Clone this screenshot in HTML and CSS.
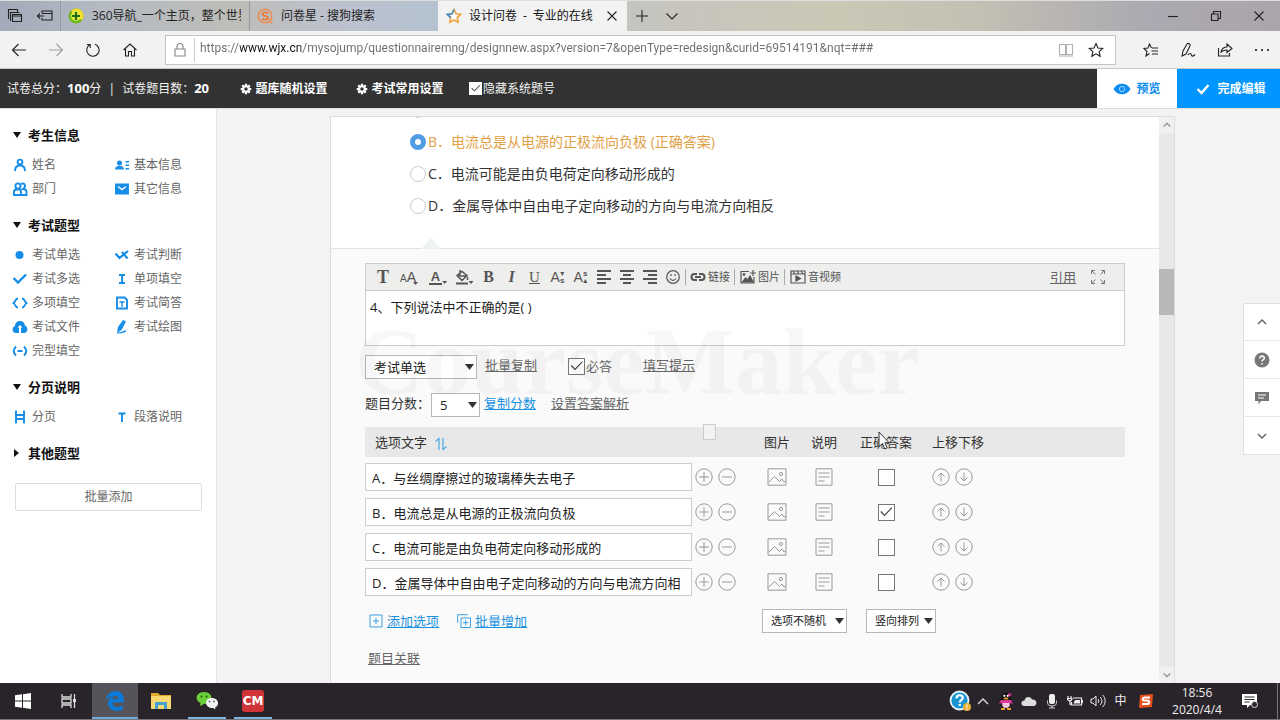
FILE: index.html
```html
<!DOCTYPE html>
<html lang="zh-CN">
<head>
<meta charset="utf-8">
<title>设计问卷 - 专业的在线</title>
<link rel="stylesheet" href="styles.css">
</head>
<body>
<svg class="sprite" aria-hidden="true">
  <symbol id="plus" viewBox="0 0 18 18"><circle cx="9" cy="9" r="8.2"/><path d="M4 9h10M9 4v10"/></symbol>
  <symbol id="minus" viewBox="0 0 18 18"><circle cx="9" cy="9" r="8.2"/><path d="M4 9h10"/></symbol>
  <symbol id="up" viewBox="0 0 18 18"><circle cx="9" cy="9" r="8.2"/><path d="M9 13.500V5M5.500 8.500 9 5l3.500 3.500"/></symbol>
  <symbol id="down" viewBox="0 0 18 18"><circle cx="9" cy="9" r="8.2"/><path d="M9 4.500V13M5.500 9.500 9 13l3.500-3.500"/></symbol>
  <symbol id="image" viewBox="0 0 20 18"><path d="M1 .8h18v16.400H1zM1.500 14.500l6-6 5 5 2.500-2.500 2 3 2-1"/><circle cx="14" cy="6" r="1.600"/></symbol>
  <symbol id="note" viewBox="0 0 18 18"><path d="M1 .8h16v16.400H1zM3.500 5h11M3.500 9h11M3.500 13h6"/></symbol>
  <symbol id="gear" viewBox="0 0 16 16"><path d="M8 1v14M1 8h14M3 3l10 10M13 3 3 13" stroke="currentColor" stroke-width="3"/><circle cx="8" cy="8" r="5" fill="currentColor"/><circle cx="8" cy="8" r="2.300" fill="#323232"/></symbol>
  <symbol id="chev" viewBox="0 0 12 12"><path d="M2 8l4-4 4 4"/></symbol>
</svg>

<header class="tabs">
  <button class="tab-tool" aria-label="标签页"><svg class="ln" width="16" height="16" viewBox="0 0 16 16"><path d="M1.500 11V1.500h9V4M3.500 13V4.500h9"/><path d="M5.500 6.500h9v7h-9zM5.500 8h9"/></svg></button>
  <button class="tab-tool" aria-label="搁置标签页"><svg class="ln" width="18" height="14" viewBox="0 0 18 14"><path d="M6 4V2h10v9H6V9M6 4.500h10M1 7h7M4 4.500 1.500 7 4 9.500"/></svg></button>
  <div class="tab">
    <svg width="16" height="16" viewBox="0 0 16 16"><circle cx="8" cy="8" r="7.500" fill="#6cb81e"/><path d="M8 .5a7.500 7.500 0 0 1 6 12L3 3A7.500 7.500 0 0 1 8 .5" fill="#f5dc2a"/><circle cx="8" cy="8" r="5" fill="#e9e83c"/><path d="M8 4v8M4 8h8" stroke="#1d6a1a" stroke-width="2.200"/></svg>
    <span class="tab-title">360导航_一个主页，整个世界</span>
  </div>
  <div class="tab">
    <svg width="16" height="16" viewBox="0 0 16 16"><circle cx="8" cy="8" r="6.800" fill="none" stroke="#ef8a50" stroke-width="1.600"/><path d="M11 5.200C9.500 4 5.500 4 5.500 6.200S11 7.500 11 9.800 7 12 5 10.600" fill="none" stroke="#ef7a3a" stroke-width="1.800"/><path d="M12 13l3 2" stroke="#ef8a50" stroke-width="1.600"/></svg>
    <span class="tab-title">问卷星 - 搜狗搜索</span>
  </div>
  <div class="tab active">
    <svg width="16" height="16" viewBox="0 0 16 16"><path d="M8 1.500l2 4.300 4.700.6-3.500 3.200.9 4.700L8 12l-4.100 2.300.9-4.700L1.300 6.400 6 5.800z" fill="#fff" stroke="#f0a23c" stroke-width="1.600"/><path d="M8 1.500l-2 4.300-4.700.6 3.500 3.200" fill="none" stroke="#3f8fd0" stroke-width="1.600"/></svg>
    <span class="tab-title">设计问卷&ensp;-&ensp;专业的在线</span>
    <button class="tab-close" aria-label="关闭标签页"><svg class="ln" width="12" height="12" viewBox="0 0 12 12"><path d="M1.500 1.500l9 9M10.500 1.500l-9 9"/></svg></button>
  </div>
  <button class="tab-add" aria-label="新建标签页"><svg class="ln" width="14" height="14" viewBox="0 0 14 14"><path d="M1 7h12M7 1v12"/></svg></button>
  <button class="tab-add" aria-label="标签预览"><svg class="ln" width="14" height="14" viewBox="0 0 14 14"><path d="M1.500 4.500 7 10l5.500-5.500"/></svg></button>
  <div class="window-buttons">
    <button aria-label="最小化"><svg class="ln" width="12" height="12" viewBox="0 0 12 12"><path d="M1 6.500h10"/></svg></button>
    <button aria-label="还原"><svg class="ln" width="12" height="12" viewBox="0 0 12 12"><path d="M1.500 4h6.500v6.500H1.500zM3.500 4V1.500h7V8.500H8"/></svg></button>
    <button aria-label="关闭"><svg class="ln" width="12" height="12" viewBox="0 0 12 12"><path d="M1.500 1.500l9 9M10.500 1.500l-9 9"/></svg></button>
  </div>
</header>

<nav class="address-row">
  <button class="nav-btn" aria-label="后退"><svg class="ln" width="16" height="14" viewBox="0 0 16 14"><path d="M15 7H1.500M7.500 1l-6 6 6 6"/></svg></button>
  <button class="nav-btn dim" aria-label="前进"><svg class="ln" width="16" height="14" viewBox="0 0 16 14"><path d="M1 7h13.500M8.500 1l6 6-6 6"/></svg></button>
  <button class="nav-btn" aria-label="刷新"><svg class="ln" width="16" height="16" viewBox="0 0 16 16"><path d="M10 2.200A6.200 6.200 0 1 1 4.600 2.800M2 2.500h3.200V6"/></svg></button>
  <button class="nav-btn" aria-label="主页"><svg class="ln" width="16" height="16" viewBox="0 0 16 16"><path d="M1.500 8 8 2l6.500 6M3.500 6.500V14H6.500V9.500h3V14h3V6.500"/></svg></button>
  <div class="address">
    <svg class="lock ln" width="14" height="16" viewBox="0 0 14 16"><path d="M2 7h10v7H2zM4 7V4.500a3 3 0 0 1 6 0V7"/></svg>
    <input class="url" type="text" aria-label="地址" value="https://www.wjx.cn/mysojump/questionnairemng/designnew.aspx?version=7&amp;openType=redesign&amp;curid=69514191&amp;nqt=###">
    <button class="faint" aria-label="阅读视图"><svg class="ln" width="16" height="14" viewBox="0 0 16 14"><path d="M1.500 1.500h6v10h-6zM8.500 1.500h6v10h-6zM1 13h14"/></svg></button>
    <button aria-label="收藏"><svg class="ln" width="16" height="16" viewBox="0 0 16 16"><path d="M8 1.500l2 4.500 4.700.4-3.600 3.200 1.100 4.700L8 11.800l-4.200 2.500 1.100-4.700L1.300 6.400 6 6z"/></svg></button>
  </div>
  <button class="nav-btn" aria-label="收藏夹"><svg class="ln" width="16" height="16" viewBox="0 0 16 16"><path d="M8.500 6 6.500 2 5 6l-4 .5L4 9.500 3 14l3.500-2.500M9 6h6M8.500 9H15M9 12h6"/></svg></button>
  <button class="nav-btn" aria-label="笔记"><svg class="ln" width="16" height="16" viewBox="0 0 16 16"><path d="M2 14l1-5 4-7c1-1.500 4 0 3 2L6 12l-4 2zM8 13c1-2 3-2 3.500 0s2 1 3.500-.5"/></svg></button>
  <button class="nav-btn" aria-label="共享"><svg class="ln" width="16" height="16" viewBox="0 0 16 16"><path d="M1.500 6v8h11v-3M4 10c1-4 3-5 6-5V2l5 4.500-5 4V8c-3 0-4 .5-6 2z"/></svg></button>
  <button class="nav-btn" aria-label="更多"><svg width="16" height="4" viewBox="0 0 16 4"><path d="M1 1h2v2H1zM7 1h2v2H7zM13 1h2v2h-2z" fill="#444"/></svg></button>
</nav>

<div class="appbar">
  <div class="totals">试卷总分：<b>100</b>分 <span class="bar">|</span> 试卷题目数：<b>20</b></div>
  <button class="setting"><svg width="12" height="12"><use href="#gear"/></svg>题库随机设置</button>
  <button class="setting"><svg width="12" height="12"><use href="#gear"/></svg>考试常用设置</button>
  <label class="hide-number"><input class="check small" type="checkbox" checked>隐藏系统题号</label>
  <button class="preview-btn"><svg width="18" height="12" viewBox="0 0 18 12"><path d="M.5 6C4-1 14-1 17.500 6 14 13 4 13 .5 6z" fill="#0c8df0"/><circle cx="9" cy="6" r="2.600" fill="none" stroke="#9fd2fb"/></svg>预览</button>
  <button class="done-btn"><svg width="14" height="12" viewBox="0 0 14 12"><path d="M1.500 6l4 4L12.500 2" fill="none" stroke="#fff" stroke-width="2.400"/></svg>完成编辑</button>
</div>

<main class="work">
  <aside class="sidebar">
    <h2><i class="tri"></i>考生信息</h2>
    <ul>
      <li><a href="#"><svg class="bl" viewBox="0 0 16 16"><circle cx="8" cy="5" r="2.400"/><path d="M3 14c0-3.500 2-5.500 5-5.500s5 2 5 5.500"/></svg>姓名</a></li>
      <li><a href="#"><svg class="bf" viewBox="0 0 16 16"><circle cx="5.500" cy="6" r="2.500"/><path d="M1 12.500c0-5 9-5 9 0zM11.500 4H15v1.500h-3.500zM11.500 7.500H15V9h-3.500zM11.500 11H15v1.500h-3.500z"/></svg>基本信息</a></li>
      <li><a href="#"><svg class="bl" viewBox="0 0 16 16"><circle cx="6" cy="5" r="2.600"/><path d="M2 14v-3c0-1.500 1-2.500 2.500-2.500h3C9 8.500 9 10 9 14zM9 3c3-1.500 5 1 3.500 3.500L11 8c3 0 3.500 1.500 3.500 3v3H9"/></svg>部门</a></li>
      <li><a href="#"><svg class="bl" viewBox="0 0 16 16"><path d="M2 3.500h12v9H2z" fill="#168ee8"/><path d="M4 5.500l4 3 4-3" stroke="#fff" stroke-width="1.400"/></svg>其它信息</a></li>
    </ul>
    <h2><i class="tri"></i>考试题型</h2>
    <ul>
      <li><a href="#"><svg class="bf" viewBox="0 0 16 16"><circle cx="7.500" cy="8" r="4"/></svg>考试单选</a></li>
      <li><a href="#"><svg class="bl" viewBox="0 0 16 16"><path d="M1.500 6.500l4 4.500L14 4M8 5l5.500 6.500" stroke-width="2.200"/></svg>考试判断</a></li>
      <li><a href="#"><svg class="bl" viewBox="0 0 16 16"><path d="M1.500 7l4.500 4.500L14 3.500" stroke-width="2.400"/></svg>考试多选</a></li>
      <li><a href="#"><svg class="bl" viewBox="0 0 16 16"><path d="M5 4h6M5 12h6M8 4v8"/></svg>单项填空</a></li>
      <li><a href="#"><svg class="bl" viewBox="0 0 16 16"><path d="M6 3.500C3 3.500 3.500 7 1.500 8 3.500 9 3 12.500 6 12.500M10 3.500c3 0 2.500 3.500 4.500 4.500-2 1-1.500 4.500-4.500 4.500"/></svg>多项填空</a></li>
      <li><a href="#"><svg class="bl" viewBox="0 0 16 16"><path d="M3 2.500h7.500l2.500 2.500v8.500H3z"/><path d="M5.500 7h5M8 7v5" stroke-width="1.400"/></svg>考试简答</a></li>
      <li><a href="#"><svg class="bf" viewBox="0 0 16 16"><path d="M4 14a3.600 3.600 0 0 1-1-7C3 1 12 0 13 6.500c3.500 1.500 3 7-.5 7.500H9V8.500h1.500L8 6 5.500 8.500H7V14z"/></svg>考试文件</a></li>
      <li><a href="#"><svg class="bf" viewBox="0 0 16 16"><path d="M9 1l3 1.500L7.500 11 3 14l1-6zM3 13.500c6 0 5-2 9-2v1.500c-2 0-3 2-9 1.500z"/></svg>考试绘图</a></li>
      <li><a href="#"><svg class="bl" viewBox="0 0 16 16"><path d="M4 3.500c-3 3-3 6 0 9M12 3.500c3 3 3 6 0 9M5.500 8h5"/></svg>完型填空</a></li>
    </ul>
    <h2><i class="tri"></i>分页说明</h2>
    <ul>
      <li><a href="#"><svg class="bl" viewBox="0 0 16 16"><path d="M4 1.500V6h8V1.500M4 14.500V10h8v4.500M4 6v4M12 6v4"/></svg>分页</a></li>
      <li><a href="#"><svg class="bl" viewBox="0 0 16 16"><path d="M4.500 4.500h7M8 4.500V13"/></svg>段落说明</a></li>
    </ul>
    <h2><i class="tri closed"></i>其他题型</h2>
    <button class="bulk-add">批量添加</button>
  </aside>

  <section class="canvas">
    <div class="panel">
      <div class="panel-body">
        <div class="preview">
          <label><input class="dot" type="radio" name="q4">A．与丝绸摩擦过的玻璃棒失去电子</label>
          <label class="correct"><input class="dot" type="radio" name="q4" checked>B．电流总是从电源的正极流向负极 (正确答案)</label>
          <label><input class="dot" type="radio" name="q4">C．电流可能是由负电荷定向移动形成的</label>
          <label><input class="dot" type="radio" name="q4">D．金属导体中自由电子定向移动的方向与电流方向相反</label>
        </div>

        <div class="editor">
          <div class="rich">
            <div class="toolbar">
              <button class="w" aria-label="字体"><span class="glyph big">T</span></button>
              <button class="w" aria-label="字号"><span class="glyph sm">A</span><span class="glyph md">A</span><i class="caret over"></i></button>
              <button class="w push" aria-label="文字颜色"><span class="glyph ul">A</span><i class="caret"></i></button>
              <button class="w" aria-label="背景颜色"><svg class="tb" width="14" height="16" viewBox="0 0 14 16"><path d="M2 6.500l5-4 5 4-5 5zM5 1v5M2 7h9M12.500 8v3" stroke-width="1.500"/><path d="M1 14.500h12" stroke-width="2"/></svg><i class="caret"></i></button>
              <button aria-label="加粗"><span class="glyph bold">B</span></button>
              <button aria-label="斜体"><span class="glyph it">I</span></button>
              <button aria-label="下划线"><span class="glyph un">U</span></button>
              <button aria-label="下标"><span class="glyph thin">A</span><span class="tiny">▾<br>s</span></button>
              <button aria-label="上标"><span class="glyph thin">A</span><span class="tiny">s<br>▴</span></button>
              <button aria-label="左对齐"><svg class="tb al" width="14" height="14" viewBox="0 0 14 14"><path d="M0 1h14M0 5h9M0 9h14M0 13h9"/></svg></button>
              <button aria-label="居中"><svg class="tb al" width="14" height="14" viewBox="0 0 14 14"><path d="M0 1h14M3 5h8M0 9h14M3 13h8"/></svg></button>
              <button aria-label="右对齐"><svg class="tb al" width="14" height="14" viewBox="0 0 14 14"><path d="M0 1h14M5 5h9M0 9h14M5 13h9"/></svg></button>
              <button aria-label="表情"><svg class="tb" width="14" height="14" viewBox="0 0 14 14"><circle cx="7" cy="7" r="6.300"/><path d="M4 8.500c1.500 2.500 4.500 2.500 6 0M5 4v2M9 4v2"/></svg></button>
              <i class="sep"></i>
              <button class="text"><svg class="tb" width="16" height="10" viewBox="0 0 16 10"><path d="M7 2H4.500a3 3 0 0 0 0 6H7M9 2h2.500a3 3 0 0 1 0 6H9M5 5h6" stroke-width="2"/></svg>链接</button>
              <i class="sep"></i>
              <button class="text"><svg class="tb" width="16" height="14" viewBox="0 0 16 14"><path d="M9 1.500H1v11.500h13V7M13 0v6M10 3h6"/><path d="M2.500 12l3-4 2 2 2.500-4 3 6z" fill="#555"/><circle cx="4" cy="4.500" r=".8"/></svg>图片</button>
              <i class="sep"></i>
              <button class="text"><svg class="tb" width="16" height="14" viewBox="0 0 16 14"><path d="M1 1h14v12H1zM1 4h14M3 1l2 3M7 1l2 3M11 1l2 3"/><path d="M6 6v5l4.500-2.500z" fill="#555"/></svg>音视频</button>
              <a class="quote" href="#">引用</a>
              <button class="full" aria-label="全屏"><svg class="tb fs" width="14" height="14" viewBox="0 0 14 14"><path d="M.5 4V.5H4M.5.5l4 4M10 .5h3.500V4M13.500.5l-4 4M.5 10v3.500H4M.5 13.500l4-4M10 13.500h3.500V10M13.500 13.500l-4-4"/></svg></button>
            </div>
            <textarea aria-label="题目标题">4、下列说法中不正确的是( )</textarea>
          </div>

          <div class="row type-row">
            <span class="pick type"><select aria-label="题型"><option>考试单选</option></select></span>
            <a href="#" class="copy">批量复制</a>
            <label class="required"><input class="check" type="checkbox" checked>必答</label>
            <a href="#">填写提示</a>
          </div>
          <div class="row score-row">
            <label for="score">题目分数：</label>
            <span class="pick score"><select id="score"><option>5</option></select></span>
            <a href="#" class="blue">复制分数</a>
            <a href="#" class="analysis">设置答案解析</a>
          </div>

          <table>
            <colgroup><col class="c-text"><col class="c-img"><col class="c-note"><col class="c-right"><col></colgroup>
            <thead>
              <tr><th class="first">选项文字 <svg width="14" height="14" viewBox="0 0 14 14"><path d="M1.500 4.500 5 1.500V13M9 1v11.500l3.500-3" fill="none" stroke="#4aa8e8" stroke-width="1.200"/></svg></th><th>图片</th><th>说明</th><th>正确答案</th><th class="last">上移下移</th></tr>
            </thead>
            <tbody>
              <tr>
                <td><div class="cell"><input class="opt" type="text" aria-label="选项A" value="A．与丝绸摩擦过的玻璃棒失去电子"><button aria-label="增加"><svg class="ic"><use href="#plus"/></svg></button><button aria-label="删除"><svg class="ic"><use href="#minus"/></svg></button></div></td>
                <td><button aria-label="图片"><svg class="ic wide"><use href="#image"/></svg></button></td>
                <td><button aria-label="说明"><svg class="ic"><use href="#note"/></svg></button></td>
                <td><input class="check" type="checkbox" aria-label="A 正确"></td>
                <td><div class="cell moves"><button aria-label="上移"><svg class="ic"><use href="#up"/></svg></button><button aria-label="下移"><svg class="ic"><use href="#down"/></svg></button></div></td>
              </tr>
              <tr>
                <td><div class="cell"><input class="opt" type="text" aria-label="选项B" value="B．电流总是从电源的正极流向负极"><button aria-label="增加"><svg class="ic"><use href="#plus"/></svg></button><button aria-label="删除"><svg class="ic"><use href="#minus"/></svg></button></div></td>
                <td><button aria-label="图片"><svg class="ic wide"><use href="#image"/></svg></button></td>
                <td><button aria-label="说明"><svg class="ic"><use href="#note"/></svg></button></td>
                <td><input class="check" type="checkbox" aria-label="B 正确" checked></td>
                <td><div class="cell moves"><button aria-label="上移"><svg class="ic"><use href="#up"/></svg></button><button aria-label="下移"><svg class="ic"><use href="#down"/></svg></button></div></td>
              </tr>
              <tr>
                <td><div class="cell"><input class="opt" type="text" aria-label="选项C" value="C．电流可能是由负电荷定向移动形成的"><button aria-label="增加"><svg class="ic"><use href="#plus"/></svg></button><button aria-label="删除"><svg class="ic"><use href="#minus"/></svg></button></div></td>
                <td><button aria-label="图片"><svg class="ic wide"><use href="#image"/></svg></button></td>
                <td><button aria-label="说明"><svg class="ic"><use href="#note"/></svg></button></td>
                <td><input class="check" type="checkbox" aria-label="C 正确"></td>
                <td><div class="cell moves"><button aria-label="上移"><svg class="ic"><use href="#up"/></svg></button><button aria-label="下移"><svg class="ic"><use href="#down"/></svg></button></div></td>
              </tr>
              <tr>
                <td><div class="cell"><input class="opt" type="text" aria-label="选项D" value="D．金属导体中自由电子定向移动的方向与电流方向相反"><button aria-label="增加"><svg class="ic"><use href="#plus"/></svg></button><button aria-label="删除"><svg class="ic"><use href="#minus"/></svg></button></div></td>
                <td><button aria-label="图片"><svg class="ic wide"><use href="#image"/></svg></button></td>
                <td><button aria-label="说明"><svg class="ic"><use href="#note"/></svg></button></td>
                <td><input class="check" type="checkbox" aria-label="D 正确"></td>
                <td><div class="cell moves"><button aria-label="上移"><svg class="ic"><use href="#up"/></svg></button><button aria-label="下移"><svg class="ic"><use href="#down"/></svg></button></div></td>
              </tr>
            </tbody>
          </table>

          <div class="row foot-row">
            <div class="adders">
              <svg class="add" width="14" height="14" viewBox="0 0 14 14"><path d="M1 1h12v12H1zM4 7h6M7 4v6"/></svg><a href="#" class="blue">添加选项</a>
              <svg class="add second" width="14" height="14" viewBox="0 0 14 14"><path d="M4 4h9.500v9.500H4zM6 8.700h5.500M8.700 6v5.500M.7 9V.7h10"/></svg><a href="#" class="blue">批量增加</a>
            </div>
            <span class="pick order"><select aria-label="选项随机"><option>选项不随机</option></select></span>
            <span class="pick flow"><select aria-label="排列方式"><option>竖向排列</option></select></span>
          </div>
          <div class="row relate"><a href="#">题目关联</a></div>

          <div class="watermark" aria-hidden="true">CourseMaker</div>
          <i class="drag-ghost"></i>
          <svg class="pointer" width="13" height="20" viewBox="0 0 13 20"><path d="M1 1v14.500l3.500-3 2.300 5.500 2.400-1-2.300-5.300H11z" fill="#fff" stroke="#333"/></svg>
        </div>
      </div>
      <div class="scrollbar">
        <button aria-label="向上滚动"><svg class="ch"><use href="#chev"/></svg></button>
        <i class="before"></i><i class="thumb"></i><i class="after"></i>
        <button class="flip" aria-label="向下滚动"><svg class="ch"><use href="#chev"/></svg></button>
      </div>
    </div>
  </section>

  <div class="float-tools">
    <button aria-label="上一题"><svg class="ch bold"><use href="#chev"/></svg></button>
    <button aria-label="帮助"><svg width="16" height="16" viewBox="0 0 16 16"><circle cx="8" cy="8" r="7.500" fill="#777"/><path d="M5.800 6.500C5.800 3 10.500 3.500 10.300 6.300 10 8 8 8 8 9.500M8 11v1.500" fill="none" stroke="#fff" stroke-width="1.500"/></svg></button>
    <button aria-label="留言"><svg width="14" height="14" viewBox="0 0 14 14"><path d="M0 1h14v9H6l-2.500 3.500V10H0z" fill="#777"/><path d="M3 4h8M3 7h6" stroke="#fff"/></svg></button>
    <button class="flip" aria-label="下一题"><svg class="ch bold"><use href="#chev"/></svg></button>
  </div>
</main>

<footer class="taskbar">
  <button aria-label="开始"><svg width="16" height="16" viewBox="0 0 16 16"><path d="M0 2.300 7 1.300V7.500H0zM8 1.200 16 0v7.500H8zM0 8.500h7v6.200l-7-1zM8 8.500h8V16l-8-1.200z" fill="#fff"/></svg></button>
  <button aria-label="任务视图"><svg width="16" height="16" viewBox="0 0 16 16"><path d="M1 1v3h9V1M1 15v-3h9v3M1 6h9v4H1zM13.500 1v14" fill="none" stroke="#ddd" stroke-width="1.300"/><path d="M12 6h3v3h-3z" fill="#ddd"/></svg></button>
  <button class="current" aria-label="Edge"><svg width="20" height="20" viewBox="0 0 20 20"><path d="M1 9C2 3 6 0 10.500 0 16 0 19 4 19 9v2.500H7C7.500 17 13.500 17 18 14.500v4C11 22 2.500 19 3 11.500 3.300 8 6 6 8 5.200 5 5.500 2.500 7 1 9zM7.200 8h6.300c0-4-5.500-4-6.300 0z" fill="#0b7ad8"/></svg></button>
  <button aria-label="文件资源管理器"><svg width="20" height="18" viewBox="0 0 20 18"><path d="M0 1h7l2 2h11v13H0z" fill="#e3a92f"/><path d="M0 4h20v13H0z" fill="#f9d871"/><path d="M4 17v-7h12v7h-3v-4H7v4z" fill="#44a0cf"/></svg></button>
  <button class="open" aria-label="微信"><svg width="22" height="18" viewBox="0 0 22 18"><path d="M8 0c10 0 10 12 0 12l-4 2 .500-3C-2 8 0 0 8 0z" fill="#6bcf3a"/><circle cx="5.500" cy="4.500" r="1" fill="#1d5b10"/><circle cx="10.500" cy="4.500" r="1" fill="#1d5b10"/><path d="M15.500 6c8 0 8 8 3.500 9.500l.5 2-2.500-1.500c-9 0-9-10-1.500-10z" fill="#f4f4f4"/><circle cx="13.500" cy="9.500" r=".9" fill="#666"/><circle cx="18" cy="9.500" r=".9" fill="#666"/></svg></button>
  <button class="open" aria-label="CourseMaker"><span class="cm">CM</span></button>
  <div class="tray">
    <i><svg width="22" height="22" viewBox="0 0 22 22"><circle cx="10.500" cy="10.500" r="9" fill="#1b95d1" stroke="#e8f4fa" stroke-width="1.800"/><path d="M7.500 8.500c0-4.500 6.500-4 6.300-.5-.3 2-3 2.300-3 4.500M10.800 14v2" fill="none" stroke="#fff" stroke-width="2.200"/><circle cx="18" cy="17" r="4" fill="#eab13a"/><path d="M18 14.500v3M18 18.500v1" stroke="#fff"/></svg></i>
    <i><svg width="12" height="8" viewBox="0 0 12 8"><path d="M1 7l5-5 5 5" fill="none" stroke="#ddd" stroke-width="1.400"/></svg></i>
    <i><svg width="16" height="18" viewBox="0 0 16 18"><ellipse cx="8" cy="10" rx="5.500" ry="6.500" fill="#17141a"/><ellipse cx="8" cy="5" rx="4.500" ry="4.500" fill="#111"/><ellipse cx="8" cy="12" rx="3.800" ry="4" fill="#f4c6e0"/><path d="M3 8h10l2 4-3-1H4l-3 1zM10 1l4 1-3 3z" fill="#e0359b"/><ellipse cx="8" cy="6.500" rx="2.500" ry="1" fill="#f0a020"/><circle cx="6.300" cy="3.800" r="1.100" fill="#fff"/><circle cx="9.700" cy="3.800" r="1.100" fill="#fff"/><path d="M3 16h4v2H3zM9 16h4v2H9z" fill="#f0a020"/></svg></i>
    <i><svg width="16" height="10" viewBox="0 0 16 10"><path d="M3 10C-1 9 0 4.500 3.500 4.500 4 0 10 0 11 3.500c5-.5 6 5.500 2 6.500z" fill="#ddd"/></svg></i>
    <i><svg width="12" height="16" viewBox="0 0 12 16"><rect x="3" y="1" width="6" height="10" rx="2" fill="#eee"/><path d="M1.500 7.500v2a4.500 3.500 0 0 0 9 0v-2M6 12.500V15M3 15h6" fill="none" stroke="#ccc"/></svg></i>
    <i><svg width="16" height="12" viewBox="0 0 16 12"><path d="M6 3h8.500v7H4.500V7M15.500 5v3M1 1v2M4 1v2M.5 3.500h4.500c0 3-4.500 3-4.500 0zM3 6v4" fill="none" stroke="#eee" stroke-width="1.200"/><path d="M8 5h5v3.500H6.500z" fill="#eee"/></svg></i>
    <i><svg width="16" height="14" viewBox="0 0 16 14"><path d="M1 5v4h2l3 3V2L3 5zM8 5c1 1 1 3 0 4M10 3c2.500 2 2.500 6 0 8M12.500 1c3.500 3 3.500 9 0 12" fill="none" stroke="#eee"/></svg></i>
    <i>中</i>
    <i class="ime"><svg width="16" height="16" viewBox="0 0 16 16"><path d="M2 2l13-1-1 13-13 1z" fill="#e8501f"/><path d="M12 4.500H6.500C4 5 4 7.500 6.500 7.500h3c2.500 0 2 3.500-.5 3.500H4" fill="none" stroke="#fff" stroke-width="2"/></svg></i>
    <time class="clock">18:56<br>2020/4/4</time>
    <button class="notice" aria-label="通知"><svg width="16" height="16" viewBox="0 0 16 16"><path d="M0 1h15v11H8l-3 3v-3H0z" fill="#fff"/><path d="M2.500 4h10M2.500 6.500h10M2.500 9h5" stroke="#292429"/><circle cx="12.500" cy="11.500" r="3" fill="#292429" stroke="#ddd"/></svg></button>
  </div>
</footer>
</body>
</html>
```
FILE: styles.css
```css
* { box-sizing: border-box; }
body {
  margin: 0;
  height: 100vh;
  overflow: hidden;
  display: flex;
  flex-direction: column;
  font: 13px/20px "Open Sans", "Noto Sans CJK SC", sans-serif;
  color: #333;
  background: #f3f3f3;
}
button, input, select, textarea { font: inherit; color: inherit; margin: 0; padding: 0; border: 0; background: none; }
button { display: inline-flex; align-items: center; justify-content: center; cursor: pointer; }
svg { flex: none; display: block; }
i { font-style: normal; }
.sprite { position: absolute; width: 0; height: 0; }
.ln { fill: none; stroke: #222; stroke-width: 1.1px; }

/* browser chrome */
.tabs {
  display: flex;
  height: 31px;
  flex: none;
  font-size: 12px;
  color: #222;
  border-top: 1px solid #ddd;
  background: linear-gradient(90deg, #a3aab9 0, #b4bac3 8%, #bdbdb8 18%, #bcc1cf 27%, #b4c2cf 34%, #c5c4bf 50%, #ccc8b6 65%, #c4c0b3 76%, #aba9b1 90%, #aca4ac 100%);
}
.tab-tool { width: 30px; }
.tab { flex: 0 1 189px; min-width: 0; display: flex; align-items: center; gap: 8px; padding: 0 8px 0 7px; border-left: 1px solid #949aa6; }
.tab-title { flex: 1; min-width: 0; white-space: pre; overflow: hidden; }
.tab.active { background: #f2f2f2; border-color: #f2f2f2; color: #111; gap: 7px; padding: 0 4px 0 7px; }
.tab-close { width: 22px; height: 24px; }
.tab-add { width: 30px; }
.window-buttons { margin-left: auto; display: flex; }
.window-buttons button { width: 43px; }

.address-row { display: flex; align-items: center; height: 38px; flex: none; background: #f2f2f2; border-bottom: 1px solid #c8c8c8; }
.nav-btn { width: 37px; height: 32px; }
.nav-btn.dim { opacity: .4; }
.address { flex: 1; display: flex; align-items: center; height: 30px; margin: 0 16px 0 17px; padding-right: 4px; background: #fff; border: 1px solid #c4c4c4; }
.address button { width: 30px; height: 28px; }
.faint { opacity: .35; }
.lock { width: 28px; opacity: .55; }
/* the host part of the address is drawn darker than the rest */
.url {
  flex: 1;
  min-width: 0;
  height: 24px;
  padding: 0 0 4px 5px;
  border-left: 1px solid #ccc;
  font-family: Roboto, sans-serif;
  font-size: 12px;
  color: transparent;
  background: linear-gradient(90deg, #6d6d6d 45px, #111 45px, #111 106px, #6d6d6d 106px);
  background-clip: text;
}

/* exam toolbar */
.appbar { display: flex; align-items: stretch; flex: none; height: 40px; background: #323232; color: #f2f2f2; font-size: 12px; border-bottom: 1px solid #ddd; }
.totals { padding-left: 7px; width: 232px; line-height: 39px; white-space: nowrap; }
.totals b { font-size: 13px; color: #fff; }
.bar { padding: 0 4px; }
.setting { width: 104px; margin-right: 12px; gap: 3px; font-weight: bold; color: #fff; white-space: nowrap; }
.hide-number { display: flex; align-items: center; gap: 1px; margin-left: 5px; }
.preview-btn { width: 80px; margin-left: auto; gap: 5px; background: #fff; color: #0c8df0; font-weight: bold; }
.done-btn { width: 103px; gap: 7px; padding-left: 5px; background: #0095ff; color: #fff; font-weight: bold; }

/* left column */
.work { flex: 1; min-height: 0; display: flex; position: relative; }
.sidebar { width: 217px; flex: none; background: #fff; border-right: 1px solid #e6e6e6; padding: 14px 14px 0 12px; color: #666; font-size: 12px; }
.sidebar h2 { display: flex; align-items: center; margin: 0 0 6px; font-size: 13px; line-height: 24px; color: #111; }
.sidebar ul { list-style: none; margin: 0 0 12px; padding: 0; display: grid; grid-template-columns: 102px 1fr; }
.sidebar a { display: flex; align-items: center; gap: 4px; line-height: 24px; color: inherit; text-decoration: none; }
.sidebar a svg { width: 16px; height: 16px; }
.bl { fill: none; stroke: #168ee8; stroke-width: 1.900px; }
.bf { fill: #168ee8; }
.tri { width: 8px; height: 6px; margin: 0 7px 0 1px; background: #111; clip-path: polygon(0 0, 100% 0, 50% 100%); }
.tri.closed { width: 5px; height: 8px; margin: 0 9px 0 2px; clip-path: polygon(0 0, 100% 50%, 0 100%); }
.bulk-add { width: 187px; height: 28px; margin: 12px 0 0 3px; border: 1px solid #ddd; border-radius: 2px; background: #fff; }

/* question panel */
.canvas { flex: 1; min-width: 0; display: flex; padding: 7px 105px 0 113px; }
.panel { flex: 1; min-width: 0; display: flex; border: 1px solid #dcdcdc; border-width: 1px 1px 0; background: #fafafa; }
.panel-body { flex: 1; min-width: 0; overflow: hidden; }
.preview { height: 131px; overflow: hidden; display: flex; flex-direction: column; justify-content: flex-end; padding: 0 0 26px 79px; background: #fff; font-size: 14px; }
.preview label { flex: none; height: 32px; display: flex; align-items: center; gap: 2px; white-space: pre; }
.correct { color: #dfa045; }
.dot { appearance: none; width: 16px; height: 16px; border: 1px solid #ccc; border-radius: 50%; background: #fff; }
.dot:checked { border: 5px solid #519de3; }

.editor { position: relative; border-top: 1px solid #e2e2e2; padding: 14px 34px 0; }
.editor::before { content: ""; position: absolute; left: 90px; top: -11px; width: 20px; height: 11px; background: #eff2f3; clip-path: polygon(50% 0, 100% 100%, 0 100%); }
.editor a { color: #666; }
.editor a.blue { color: #1b92e0; }
.rich { border: 1px solid #ccc; background: #fff; }
.toolbar { display: flex; align-items: center; height: 27px; padding: 0 15px 0 4px; background: #eeeeed; border-bottom: 1px solid #ccc; color: #555; }
.toolbar button { width: 23px; height: 24px; flex: none; }
.toolbar .w { width: 26px; position: relative; }
.toolbar .push { margin-left: 3px; }
.toolbar .text { width: auto; gap: 2px; font-size: 11px; }
.glyph { font: bold 15px/18px "Liberation Serif", serif; }
.glyph.big { font-size: 18px; }
.glyph.sm { font: 10px/20px "Liberation Sans", sans-serif; padding-top: 3px; }
.glyph.md { font: 14px/18px "Liberation Sans", sans-serif; }
.glyph.ul { font: bold 13px/13px "Liberation Sans", sans-serif; border-bottom: 2px solid #555; padding: 0 2px; }
.glyph.bold { font-size: 16px; }
.glyph.it { font-size: 16px; font-style: italic; }
.glyph.un { font-weight: normal; text-decoration: underline; }
.glyph.thin { font: 14px/18px "Liberation Sans", sans-serif; }
.tiny { font: bold 8px/7px "Liberation Sans", "DejaVu Sans", sans-serif; }
.caret { width: 5px; height: 3px; align-self: flex-end; margin-bottom: 5px; background: #555; clip-path: polygon(0 0, 100% 0, 50% 100%); }
.caret.over { margin-left: -3px; margin-bottom: 4px; }
.tb { fill: none; stroke: #555; stroke-width: 1.200px; }
.al { stroke-width: 2px; }
.fs { stroke: #777; stroke-width: 1px; }
.sep { width: 1px; height: 16px; margin: 0 4px 0 1px; background: #aaa; }
.text + .sep { margin: 0 5px 0 4px; }
.quote { margin-left: auto; }
.toolbar .full { margin-left: 10px; }
.rich textarea { display: block; width: 100%; height: 54px; padding: 6px 4px; resize: none; outline: 0; color: #222; }

.row { display: flex; align-items: center; white-space: nowrap; }
.type-row { margin-top: 9px; height: 24px; align-items: flex-start; }
.score-row { margin-top: 14px; height: 24px; align-items: flex-start; }
.copy { margin: 0 31px 0 8px; }
.required { display: flex; align-items: center; gap: 1px; margin-right: 31px; padding-top: 1px; color: #666; }
.analysis { margin-left: 15px; }
.pick { position: relative; display: block; height: 24px; }
.pick::after { content: ""; position: absolute; right: 3px; top: 9px; width: 9px; height: 6px; background: #333; clip-path: polygon(0 0, 100% 0, 50% 100%); pointer-events: none; }
.pick select { appearance: none; width: 100%; height: 100%; padding-left: 8px; background: #fff; border: 1px solid #b8b8b8; border-radius: 0; color: #222; }
.type { width: 112px; }
.score { width: 49px; margin: 0 4px 0 1px; }
.order { width: 85px; margin-right: 19px; }
.flow { width: 70px; }
.order select, .flow select { font-size: 11px; }

.check { appearance: none; flex: none; display: block; width: 17px; height: 17px; border: 1px solid #777; background: #fff; }
.check:checked::before { content: ""; display: block; width: 15px; height: 15px; background: #444; clip-path: polygon(12% 50%, 40% 78%, 92% 24%, 87% 18%, 40% 67%, 18% 44%); }
.check.small { width: 13px; height: 13px; border-color: #fff; }
.check.small:checked::before { width: 11px; height: 11px; }

table { width: 100%; margin-top: 10px; table-layout: fixed; border-collapse: collapse; }
.c-text { width: 385px; }
.c-img { width: 54px; }
.c-note { width: 40px; }
.c-right { width: 84px; }
th { height: 30px; padding: 0; background: #e8e8e8; font-weight: normal; white-space: nowrap; }
th.first { text-align: left; padding-left: 10px; }
th.first svg { display: inline-block; vertical-align: -4px; margin-left: 4px; }
th.last { text-align: left; padding-left: 4px; }
td { height: 35px; padding: 6px 0 1px; }
td > button, td > .check { display: flex; margin: 0 auto; }
.cell { display: flex; align-items: center; }
.cell button { margin-left: 3px; width: 20px; height: 20px; }
.opt { width: 327px; height: 28px; padding: 0 10px 0 6px; background: #fff; border: 1px solid #ccc; color: #222; }
.opt + button { margin-left: 2px; }
.cell.moves button + button { margin-left: 3px; }
.ic { width: 18px; height: 18px; fill: none; stroke: #999; stroke-width: 1px; }
.ic.wide { width: 20px; }

.foot-row { margin-top: 12px; }
.adders { width: 397px; display: flex; align-items: center; padding-left: 4px; }
.adders a { margin-left: 4px; }
.add { fill: none; stroke: #3a9fe4; }
.add.second { margin-left: 18px; }
.relate { margin: 15px 0 0 3px; }

.watermark { position: absolute; left: 24px; top: 61px; font: bold 95px/104px "Liberation Serif", serif; color: rgba(0, 0, 0, .03); pointer-events: none; }
.drag-ghost { position: absolute; left: 372px; top: 175px; width: 13px; height: 16px; background: #f2f2f2; border: 1px solid #ccc; }
.pointer { position: absolute; left: 547px; top: 182px; pointer-events: none; }

.scrollbar { width: 15px; flex: none; display: flex; flex-direction: column; background: #e8e8e8; }
.scrollbar button { width: 15px; height: 16px; background: #f0f0f0; }
.before { flex: 136; }
.thumb { height: 46px; background: #b8b8b8; }
.after { flex: 352; }
.ch { width: 10px; height: 10px; fill: none; stroke: #888; stroke-width: 1.500px; }
.ch.bold { width: 12px; height: 12px; stroke: #666; }
.flip svg { transform: rotate(180deg); }

.float-tools { position: absolute; right: 0; top: 194px; width: 37px; display: flex; flex-direction: column; border: 1px solid #e0e0e0; border-right: 0; background: #fff; }
.float-tools button { height: 36px; }
.float-tools button + button { border-top: 1px solid #e6e6e6; height: 38px; }

/* taskbar */
.taskbar { display: flex; flex: none; height: 37px; background: #292429; color: #eee; border-bottom: 1px solid #77757a; font-size: 12px; }
.taskbar > button { width: 46px; }
.current { background: #55545a; box-shadow: inset 0 -2px #6fa9d8; }
.open { background: linear-gradient(#7fb4e0, #7fb4e0) center bottom / 38px 2px no-repeat; }
.cm { width: 22px; height: 22px; border-radius: 3px; background: #d03338; color: #fff; font: bold 12px/22px "DejaVu Sans", sans-serif; text-align: center; }
.tray { margin-left: auto; display: flex; align-items: center; padding-right: 9px; margin-right: 2px; border-right: 1px solid #777; }
.tray i { width: 23px; display: flex; justify-content: center; }
.tray .ime { width: 28px; }
.clock { width: 70px; margin-left: 2px; text-align: center; font-size: 12px; line-height: 17px; }
.notice { width: 36px; height: 36px; }
```
